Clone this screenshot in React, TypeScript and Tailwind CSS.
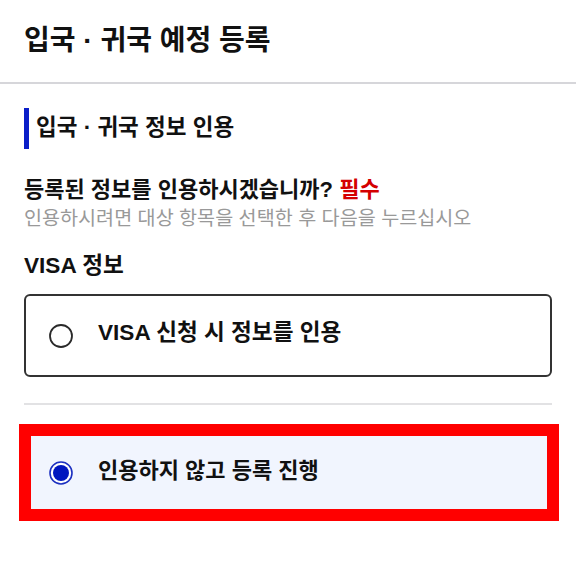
import React from "react";

const Radio = ({ checked }: { checked: boolean }) => (
    <svg width="24" height="24" viewBox="0 0 24 24" className="shrink-0">
        {checked ? (
            <>
                <circle cx="12" cy="12" r="11" fill="white" stroke="#1b2fc0" strokeWidth="1.6" />
                <circle cx="12" cy="12" r="8" fill="#0016bf" />
            </>
        ) : (
            <circle cx="12" cy="12" r="11" fill="white" stroke="#2a2a2a" strokeWidth="1.8" />
        )}
    </svg>
);

export default function App() {
    return (
        <div className="w-[576px] h-[584px] bg-white text-[#111] font-['Liberation_Sans','Noto_Sans_CJK_KR',sans-serif] overflow-hidden">
            <header className="h-[84px] flex items-center px-6 border-b-2 border-[#d6d6da]">
                <h1 className="text-[28px] font-bold leading-none">입국 · 귀국 예정 등록</h1>
            </header>

            <main className="px-6">
                <div className="mt-[24px] h-[41px] flex items-center border-l-[5px] border-[#0a1ec8] pl-[7px]">
                    <h2 className="text-[22.5px] font-bold leading-none">입국 · 귀국 정보 인용</h2>
                </div>

                <p className="mt-[27px] text-[22px] font-bold leading-[28px]">
                    등록된 정보를 인용하시겠습니까? <span className="text-[#d40000]">필수</span>
                </p>
                <p className="mt-[1px] text-[19.6px] leading-[27px] text-[#999]">
                    인용하시려면 대상 항목을 선택한 후 다음을 누르십시오
                </p>

                <h3 className="mt-[20px] text-[22.6px] font-bold leading-[28px]">VISA 정보</h3>

                <label className="mt-[14px] h-[83px] flex items-center gap-[25px] pl-[23px] border-2 border-[#333] rounded-[6px]">
                    <Radio checked={false} />
                    <span className="text-[22.6px] font-bold leading-none -mt-[4px]">VISA 신청 시 정보를 인용</span>
                </label>

                <div className="mt-[26px] h-[2px] bg-[#e2e2e4]" />

                <div className="mt-[19px] -ml-[5px] -mr-[7px] border-[12px] border-[#ff0000]">
                    <label className="h-[73px] flex items-center gap-[25px] pl-[18px] bg-[#f1f5fe]">
                        <Radio checked={true} />
                        <span className="text-[22px] font-bold leading-none -mt-[4px]">인용하지 않고 등록 진행</span>
                    </label>
                </div>
            </main>
        </div>
    );
}
